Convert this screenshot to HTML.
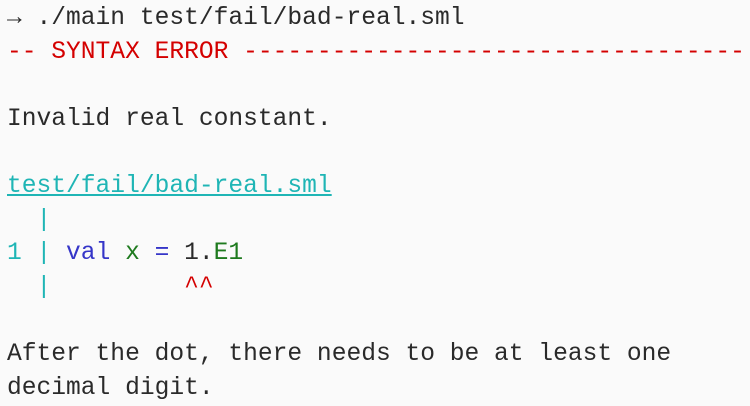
<!DOCTYPE html>
<html><head><style>
html,body{margin:0;padding:0;background:#fafafa;width:750px;height:406px;overflow:hidden}
pre{margin:0;padding:0 0 0 7px;font-family:"Liberation Mono",monospace;font-size:24.6px;line-height:33.6px;color:#2a2a2a;white-space:pre;position:relative;top:2px}
.r{color:#d40000}.c{color:#1fb5b5}.b{color:#3535c8}.g{color:#1e7a1e}
.u{text-decoration:underline}
</style></head><body><pre>→ ./main test/fail/bad-real.sml
<span class="r">-- SYNTAX ERROR ----------------------------------</span>

Invalid real constant.

<span class="c u">test/fail/bad-real.sml</span>
<span class="c">  |</span>
<span class="c">1 |</span> <span class="b">val</span> <span class="g">x</span> <span class="b">=</span> 1.<span class="g">E1</span>
<span class="c">  |</span>         <span class="r">^^</span>

After the dot, there needs to be at least one
decimal digit.</pre></body></html>
